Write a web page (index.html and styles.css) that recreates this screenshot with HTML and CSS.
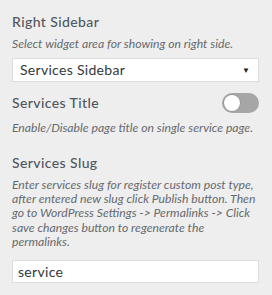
FILE: index.html
```html
<!DOCTYPE html>
<html lang="en">
<head>
  <meta charset="UTF-8" />
  <title>Service Settings</title>
  <link rel="stylesheet" href="styles.css">
</head>
<body>
  <div class="panel">

    <div class="field field-select">
      <label class="field-title" for="rightSidebar">Right Sidebar</label>
      <p class="field-desc">Select widget area for showing on right side.</p>
      <div class="select-wrap">
        <select id="rightSidebar">
          <option>Services Sidebar</option>
          <option>Main Sidebar</option>
        </select>
        <span class="select-arrow">&#9660;</span>
      </div>
    </div>

    <div class="field field-toggle">
      <div class="title-row">
        <span class="field-title">Services Title</span>
        <label class="toggle">
          <input type="checkbox">
          <span class="toggle-knob"></span>
        </label>
      </div>
      <p class="field-desc">Enable/Disable page title on single service page.</p>
    </div>

    <div class="field field-text">
      <label class="field-title" for="servicesSlug">Services Slug</label>
      <p class="field-desc">Enter services slug for register custom post type, after entered new slug click Publish button. Then go to WordPress Settings -&gt; Permalinks -&gt; Click save changes button to regenerate the permalinks.</p>
      <input type="text" id="servicesSlug" class="text-input" value="service">
    </div>

  </div>
</body>
</html>
```

FILE: styles.css
```css
body {
  margin: 0;
  background-color: #eeeeee;
  color: #555d66;
  font-family: 'Lato', sans-serif;
}

.panel {
  padding: 11.5px 13px 12px 12px;
}

.field-title {
  display: block;
  font-size: 14px;
  font-weight: 500;
  line-height: 20px;
  letter-spacing: 0.4px;
  color: #50575e;
}

.field-desc {
  margin: 5.3px 0 0;
  font-size: 12.2px;
  font-style: italic;
  line-height: 14.3px;
  color: #666a6e;
}

.field-select {
  margin-bottom: 11.3px;
}

.field-toggle {
  margin-bottom: 17.5px;
}

.field-toggle .field-desc {
  margin-top: 7.5px;
}

.select-wrap {
  position: relative;
  margin-top: 6.9px;
}

select {
  display: block;
  width: 100%;
  height: 24px;
  padding: 0 7px;
  background-color: #fff;
  border: 1px solid #dddddd;
  border-radius: 0;
  color: #32373c;
  font-family: inherit;
  font-size: 14px;
  letter-spacing: 0.3px;
  appearance: none;
  -webkit-appearance: none;
  box-sizing: border-box;
}

.select-arrow {
  position: absolute;
  right: 9px;
  top: 7px;
  font-size: 8px;
  color: #222;
  pointer-events: none;
}

.title-row {
  display: flex;
  align-items: flex-start;
  justify-content: space-between;
}

.toggle {
  position: relative;
  width: 37px;
  height: 20px;
}

.toggle input {
  display: none;
}

.toggle-knob {
  position: absolute;
  inset: 0;
  background-color: #a6a6a6;
  border-radius: 10px;
}

.toggle-knob::before {
  content: "";
  position: absolute;
  left: 2px;
  top: 2px;
  width: 16px;
  height: 16px;
  background-color: #fff;
  border-radius: 50%;
  box-shadow: 0 0 0 0.5px #8a8a8a;
}

.text-input {
  display: block;
  width: 100%;
  height: 23px;
  margin-top: 10.4px;
  padding: 0 5px;
  background-color: #fff;
  border: 1px solid #dddddd;
  color: #32373c;
  font-family: inherit;
  font-size: 14px;
  letter-spacing: 0.3px;
  box-sizing: border-box;
}
```
